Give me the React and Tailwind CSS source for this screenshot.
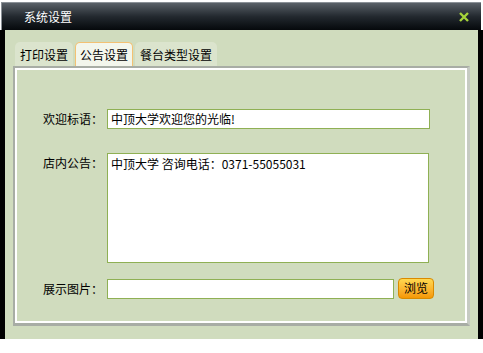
import React from "react";

const font = { fontFamily: '"Noto Sans CJK SC", "Liberation Sans", sans-serif' };

const Tab = ({ label, active }) => (
  <div
    className={`h-[24px] px-[4px] flex items-center text-[12px] rounded-t-[5px] border border-b-0 ${
      active ? "bg-[#f3f6ec] border-[#f3c173]" : "bg-[#dbe4cd] border-transparent"
    }`}
  >
    {label}
  </div>
);

const Field = ({ children, className }) => (
  <div className={`bg-white border border-[#8fb054] text-[12px] leading-[16px] px-[3px] ${className}`}>{children}</div>
);

export default function App() {
  return (
    <div className="w-[483px] h-[353px] bg-white text-black" style={font}>
      <div className="pt-[2px] pl-[1px] pr-[2px]">
        <div className="h-[28px] flex items-center justify-between pl-[22px] pr-[12px] bg-gradient-to-b from-[#5a6168] via-[#23292f] to-[#06090c] border-t border-l border-[#8b9197]">
          <span className="text-white text-[12px]">系统设置</span>
          <svg width="10" height="10" viewBox="0 0 10 10">
            <path d="M1 1 L9 9 M9 1 L1 9" stroke="#a6d43a" strokeWidth="2.4" />
          </svg>
        </div>
      </div>
      <div className="h-[309px] bg-[#d0dcbe] border-l-[5px] border-r-[5px] border-black flex flex-col">
        <div className="flex gap-[2px] pl-[10px] pt-[12px]">
          <Tab label="打印设置" />
          <Tab label="公告设置" active />
          <Tab label="餐台类型设置" />
        </div>
        <div className="mx-[8px] h-[260px] border-t-[2px] border-l-[2px] border-r-[3px] border-b-[3px] border-t-[#a8ada5] border-l-[#a8ada5] border-r-[#c6cbc2] border-b-[#a8ada5]">
          <div className="h-full border-2 border-white flex flex-col pt-[39px] pl-[26px] text-[12px]">
            <div className="flex items-center">
              <div className="w-[64px]">欢迎标语：</div>
              <Field className="w-[323px] h-[20px] flex items-center">中顶大学欢迎您的光临!</Field>
            </div>
            <div className="flex mt-[24px]">
              <div className="w-[64px] pt-[1px]">店内公告：</div>
              <Field className="w-[322px] h-[110px] pt-[2px]">中顶大学 咨询电话：0371-55055031</Field>
            </div>
            <div className="flex items-center mt-[16px]">
              <div className="w-[64px]">展示图片：</div>
              <Field className="w-[287px] h-[20px]" />
              <button className="ml-[4px] w-[36px] h-[21px] rounded-[4px] border border-[#d98a00] bg-gradient-to-b from-[#ffd84e] to-[#f59800] text-[12px] leading-[18px] -mt-[2px]">
                浏览
              </button>
            </div>
          </div>
        </div>
      </div>
    </div>
  );
}
